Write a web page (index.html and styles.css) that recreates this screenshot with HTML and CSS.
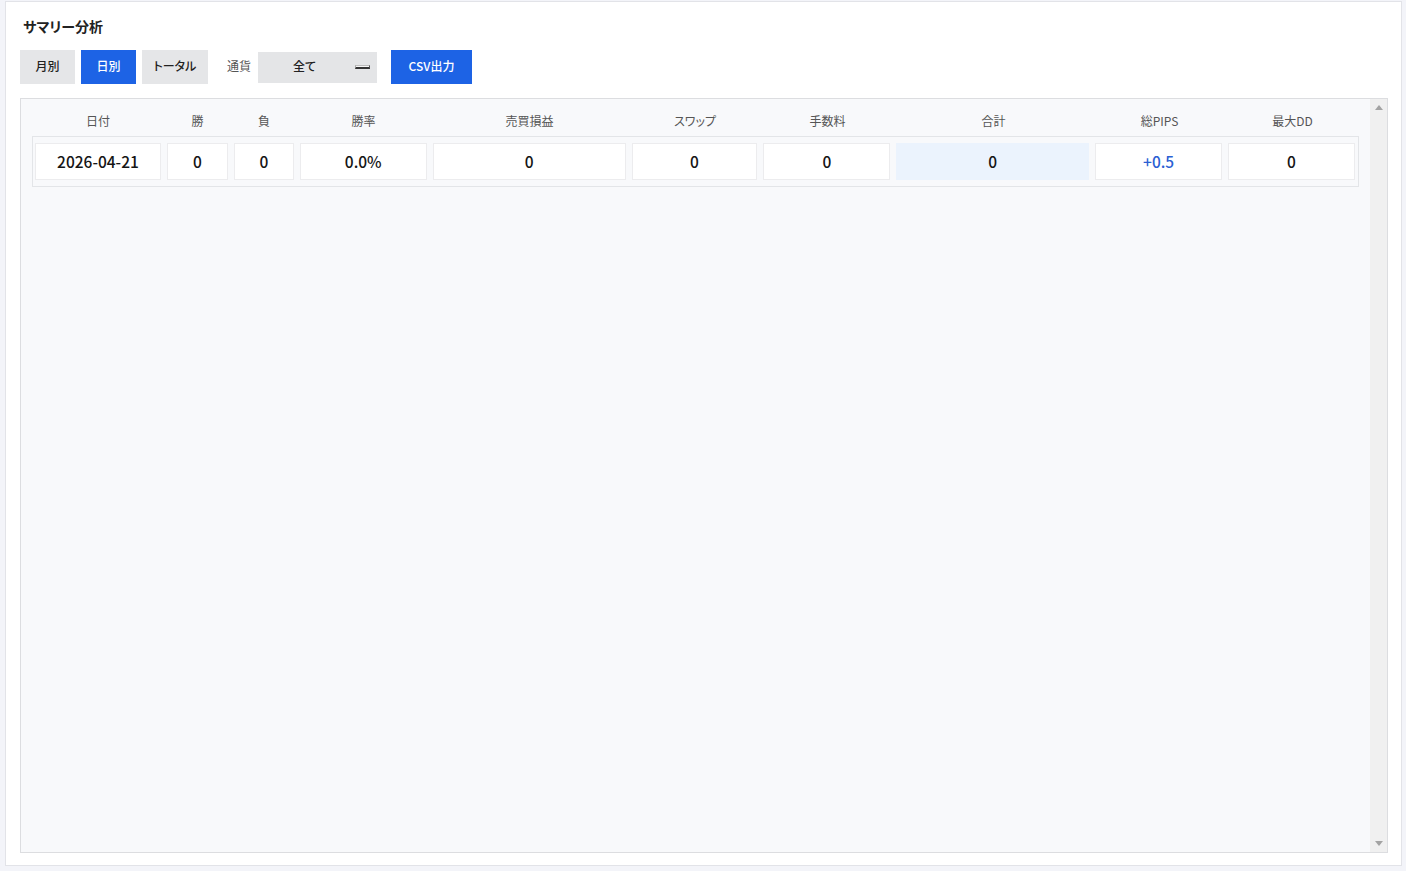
FILE: index.html
```html
<!DOCTYPE html>
<html lang="ja">
<head>
<meta charset="utf-8">
<title>サマリー分析</title>
<link rel="stylesheet" href="styles.css">
</head>
<body>
<div class="panel">
  <h2 class="title">サマリー分析</h2>
  <div class="toolbar">
    <button class="btn">月別</button>
    <button class="btn active">日別</button>
    <button class="btn wide">トータル</button>
    <span class="label">通貨</span>
    <div class="select"><span class="select-text">全て</span><span class="select-arrow"></span></div>
    <button class="btn primary">CSV出力</button>
  </div>
  <div class="table-box">
    <div class="table-content">
      <div class="grid head">
        <div>日付</div><div>勝</div><div>負</div><div>勝率</div><div>売買損益</div><div>スワップ</div><div>手数料</div><div>合計</div><div>総PIPS</div><div>最大DD</div>
      </div>
      <div class="row-box">
        <div class="grid row">
          <div class="cell">2026-04-21</div>
          <div class="cell">0</div>
          <div class="cell">0</div>
          <div class="cell">0.0%</div>
          <div class="cell">0</div>
          <div class="cell">0</div>
          <div class="cell">0</div>
          <div class="cell total">0</div>
          <div class="cell pos">+0.5</div>
          <div class="cell">0</div>
        </div>
      </div>
    </div>
    <div class="scrollbar">
      <span class="arrow up"></span>
      <span class="arrow down"></span>
    </div>
  </div>
</div>
</body>
</html>
```
FILE: styles.css
```css
* { box-sizing: border-box; }
html, body { margin: 0; padding: 0; }
body {
  background: #f3f4f9;
  font-family: "Noto Sans CJK JP", "Noto Sans", sans-serif;
  font-feature-settings: "palt";
  color: #222;
}
.panel {
  margin: 1px 4px 0 5px;
  height: 865px;
  background: #fff;
  border: 1px solid #e2e3e8;
  padding: 14px 13px 12px 14px;
  display: flex;
  flex-direction: column;
}
.title {
  margin: 0 0 14px 3px;
  font-size: 14px;
  line-height: 20px;
  font-weight: 700;
  color: #222;
}
.toolbar {
  display: flex;
  align-items: center;
  height: 34px;
  margin-bottom: 14px;
}
.btn {
  height: 34px;
  width: 55px;
  border: none;
  background: #e5e6e8;
  color: #222;
  font-family: inherit;
  font-feature-settings: "palt";
  font-size: 12px;
  line-height: 16px;
  font-weight: 500;
  padding: 0 0 3px 0;
  margin-right: 6px;
}
.btn.wide { width: 66px; margin-right: 19px; }
.btn.active, .btn.primary { background: #1d63e5; color: #fff; }
.btn.primary { width: 81px; margin-right: 0; }
.label {
  font-size: 12px;
  color: #555;
  margin-right: 7px;
  padding-bottom: 3px;
}
.select {
  width: 119px;
  height: 31px;
  background: #e4e5e7;
  display: flex;
  align-items: center;
  padding: 0 7px 3px 35px;
  margin-right: 14px;
  font-size: 12px;
  font-weight: 500;
  color: #222;
}
.select-text { flex: 1; }
.select-arrow {
  width: 15px;
  height: 4px;
  margin-top: 3px;
  background: #f6f6f6;
  border-top: 1px solid #bbb;
  border-left: 1px solid #aaa;
  border-right: 1px solid #555;
  border-bottom: 2px solid #333;
}
.table-box {
  flex: 1;
  display: flex;
  border: 1px solid #dcdde0;
  background: #f8f9fb;
}
.table-content {
  flex: 1;
  padding: 0 11px;
}
.grid {
  display: grid;
  grid-template-columns: 126fr 61fr 60fr 127fr 193fr 126fr 127fr 193fr 127fr 127fr;
  column-gap: 6px;
}
.head {
  padding: 14px 3px 7px 3px;
  font-size: 12px;
  line-height: 16px;
  color: #555;
  text-align: center;
}
.row-box {
  border: 1px solid #e3e5e8;
  padding: 6px 3px 6px 2px;
}
.cell {
  height: 37px;
  line-height: 35px;
  background: #fff;
  border: 1px solid #ececee;
  text-align: center;
  font-size: 15.5px;
  font-weight: 500;
  color: #151515;
}
.cell.total { background: #ebf3fd; border-color: #ebf3fd; }
.cell.pos { color: #2b5fd3; }
.scrollbar {
  width: 17px;
  background: #f0f0f0;
  display: flex;
  flex-direction: column;
  justify-content: space-between;
  align-items: center;
  padding: 6px 0;
}
.arrow {
  width: 0;
  height: 0;
  border-left: 4px solid transparent;
  border-right: 4px solid transparent;
}
.arrow.up { border-bottom: 5px solid #a3a3a3; }
.arrow.down { border-top: 5px solid #a3a3a3; }
```
